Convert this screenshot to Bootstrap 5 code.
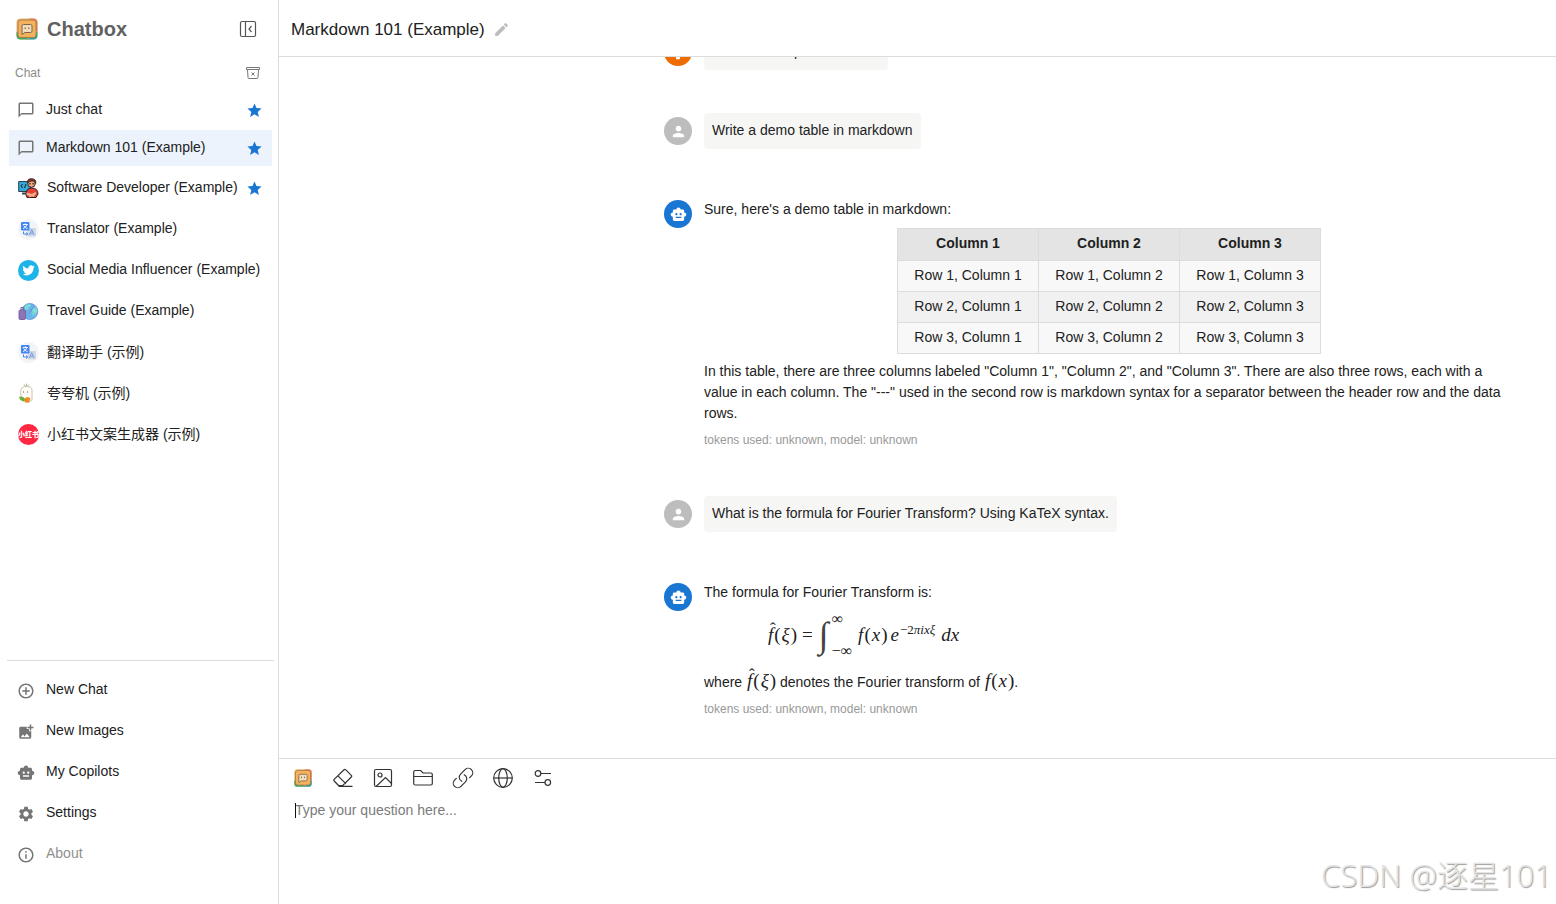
<!DOCTYPE html>
<html lang="en">
<head>
<meta charset="utf-8">
<meta name="viewport" content="width=device-width, initial-scale=1">
<title>Chatbox</title>
<link href="https://cdn.jsdelivr.net/npm/bootstrap@5.3.0/dist/css/bootstrap.min.css" rel="stylesheet">
<style>
  body { font-family: "Liberation Sans", "Noto Sans CJK SC", sans-serif; font-size: 14px; line-height: 21px; color: #212121; background: #fff; }
  .line { border-color: #dcdcdc !important; }
  .side { width: 279px; }
  .brand-name { font-size: 20px; line-height: 28px; color: #616161; margin-left: 9px; }
  .bare { border: 0; background: none; padding: 0; color: inherit; display: flex; }
  .side-head { height: 58px; padding: 0 21px 0 16px; }
  .label-row { height: 30px; padding: 0 18px 0 15px; font-size: 12px; color: #8a8a8a; }
  .entries { padding: 4px 6px 0 9px; gap: 2px; }
  .entry { height: 39px; padding: 0 9px; color: #212121; text-decoration: none; gap: 8px; }
  .entry.plain { height: 36px; padding-left: 8px; }
  .entry.plain + .entry:not(.plain) { height: 40px; }
  .entry.current { background: #ecf3fc; }
  .entry .slot { width: 21px; flex: none; display: flex; color: #757575; }
  .entry .label { white-space: nowrap; padding-bottom: 2px; }
  .entry .label:lang(zh) { padding-bottom: 0; }
  .lower { margin: 0 4px 0 7px; }
  .lower .entries { padding: 10px 0 30px 1px; }
  .muted { color: #8f8f8f; }
  .topbar { height: 57px; padding: 2px 12px 0; font-size: 17px; }
  .thread { min-height: 0; }
  .column { width: 100%; max-width: 850px; margin: 0 42px 0 auto; }
  .turn { gap: 12px; }
  .turn.asked { padding-bottom: 43px; }
  .turn.answer { padding: 7px 0 47px; }
  .turn.answer:last-child { padding-bottom: 40px; }
  .face { width: 28px; height: 28px; flex: none; color: #fff; margin-top: 4px; }
  .answer .face { margin-top: 1px; }
  .bubble { background: #f6f6f5; border-radius: 4px; padding: 7px 8px 8px; }
  .grid-demo { border-collapse: collapse; margin: 8px auto 7px; text-align: center; }
  .grid-demo th, .grid-demo td { width: 141px; border: 1px solid #dcdcdc; padding: 4px 16px 5px; background: #f8f8f8; }
  .grid-demo th { background: #e4e4e4; padding-bottom: 6px; }
  .grid-demo tr:nth-child(even) td { background: #f1f1f1; }
  .tokens { font-size: 12px; line-height: 18px; margin-top: 7px; color: #999; }
  .math { font-family: "Liberation Serif", serif; font-size: 19px; line-height: 24px; white-space: nowrap; }
  .math i { padding: 0 1px; }
  .hatted { position: relative; display: inline-block; }
  .hatted::after { content: "ˆ"; position: absolute; left: 3px; top: -6px; font-style: normal; font-size: 17px; }
  .display-math { height: 40px; margin: 12px 0 14px 63px; gap: 5px; }
  .integral { font-size: 36px; line-height: 40px; color: #444; }
  .limits { font-size: 16px; line-height: 12px; height: 44px; margin-left: -3px; }
  .power { font-size: 13px; line-height: 13px; padding-bottom: 8px; }
  .power i { padding: 0; }
  .exponential { margin-left: -3px; }
  .composer { height: 146px; padding: 9px 15px 0 14px; }
  .tools { gap: 20px; }
  .ask { font: inherit; width: 100%; height: 80px; border: 0; outline: 0; resize: none; padding: 0 0 0 2px; background: none; }
  .ask::placeholder { color: #7b7b7b; opacity: 1; }
  .field { padding-top: 12px; }
  .caret { position: absolute; left: 2px; top: 15px; width: 1px; height: 15px; background: #111; }
  .signature { position: absolute; right: 4px; bottom: 9px; font-family: "Open Sans", "Noto Sans CJK SC", sans-serif; font-weight: 300; font-size: 31px; line-height: 40px; color: #e4e4e4; text-shadow: 1px 1px 1px #999; pointer-events: none; white-space: nowrap; }
  .pen { color: #bdbdbd; margin-left: 8px; }
</style>
</head>
<body class="overflow-hidden">
<svg width="0" height="0" class="position-absolute" aria-hidden="true">
  <defs>
    <symbol id="logo" viewBox="0 0 22 22">
      <rect x=".5" y=".5" width="21" height="21" rx="4" fill="#e9b878"/>
      <path d="M12 .5h5.500a4 4 0 0 1 4 4V13h-3V3z" fill="#e98468"/>
      <path d="M.5 14v3.500a4 4 0 0 0 4 4H12v-3z" fill="#3fae6b"/>
      <path d="M11 21.500h6.500a4 4 0 0 0 4-4V13l-3 4z" fill="#2aa4a8"/>
      <rect x="2" y="2" width="18" height="17.500" rx="2.500" fill="#f4b25c" stroke="#a8743f" stroke-width=".9"/>
      <path d="M7.500 6.500h7q1.500 0 1.500 1.500v5q0 1.500-1.500 1.500H9l-3 2V8q0-1.500 1.500-1.500z" fill="#f3dcb8" stroke="#7d6450"/>
      <path d="M9.200 9.500v1.500M12.800 9.500v1.500" stroke="#6b4d33"/>
    </symbol>
    <symbol id="bubble" viewBox="0 0 24 24"><path fill="currentColor" d="M20 2H4c-1.100 0-2 .9-2 2v18l4-4h14c1.100 0 2-.9 2-2V4c0-1.100-.9-2-2-2zm0 14H6l-2 2V4h16v12z"/></symbol>
    <symbol id="star" viewBox="0 0 24 24"><path fill="#1976d2" d="M12 17.270 18.180 21l-1.640-7.030L22 9.240l-7.190-.61L12 2 9.190 8.630 2 9.240l5.460 4.730L5.820 21z"/></symbol>
    <symbol id="robot" viewBox="0 0 24 24"><path fill="currentColor" d="M20 9V7c0-1.100-.9-2-2-2h-3c0-1.660-1.340-3-3-3S9 3.340 9 5H6c-1.100 0-2 .9-2 2v2c-1.660 0-3 1.340-3 3s1.340 3 3 3v4c0 1.100.9 2 2 2h12c1.100 0 2-.9 2-2v-4c1.660 0 3-1.340 3-3s-1.340-3-3-3zM7.500 11.500c0-.83.67-1.500 1.500-1.500s1.500.67 1.500 1.500S9.830 13 9 13s-1.500-.67-1.500-1.500zM16 17H8v-2h8v2zm-1-4c-.83 0-1.500-.67-1.500-1.500S14.170 10 15 10s1.500.67 1.500 1.500S15.830 13 15 13z"/></symbol>
    <symbol id="person" viewBox="0 0 24 24"><path fill="currentColor" d="M12 12c2.210 0 4-1.790 4-4s-1.790-4-4-4-4 1.790-4 4 1.790 4 4 4zm0 2c-2.670 0-8 1.340-8 4v2h16v-2c0-2.660-5.330-4-8-4z"/></symbol>
    <symbol id="gear" viewBox="0 0 24 24"><path fill="currentColor" d="M19.140 12.940c.04-.3.06-.61.06-.94 0-.32-.02-.64-.07-.94l2.030-1.580c.18-.14.23-.41.12-.61l-1.920-3.320c-.12-.22-.37-.29-.59-.22l-2.390.96c-.5-.38-1.030-.7-1.620-.94l-.36-2.540c-.04-.24-.24-.41-.48-.41h-3.840c-.24 0-.43.17-.47.41l-.36 2.540c-.59.24-1.130.57-1.620.94l-2.390-.96c-.22-.08-.47 0-.59.22L2.740 8.870c-.12.21-.08.47.12.61l2.030 1.580c-.05.3-.09.63-.09.94s.02.64.07.94l-2.030 1.580c-.18.14-.23.41-.12.61l1.920 3.320c.12.22.37.29.59.22l2.390-.96c.5.38 1.030.7 1.620.94l.36 2.540c.05.24.24.41.48.41h3.840c.24 0 .44-.17.47-.41l.36-2.540c.59-.24 1.130-.56 1.620-.94l2.390.96c.22.08.47 0 .59-.22l1.920-3.320c.12-.22.07-.47-.12-.61l-2.010-1.580zM12 15.600c-1.980 0-3.600-1.620-3.600-3.600s1.620-3.600 3.600-3.600 3.600 1.620 3.600 3.600-1.620 3.600-3.600 3.600z"/></symbol>
    <symbol id="translate" viewBox="0 0 21 21">
      <circle cx="10.500" cy="10.500" r="10.500" fill="#f3f4f6"/>
      <rect x="9.500" y="9" width="8.500" height="8.500" rx="1" fill="#d3d8e0"/>
      <rect x="3" y="3" width="8.500" height="8.500" rx="1" fill="#4285f4"/>
      <path d="M4.800 5.500h5M7.300 4.300v1.200M9 5.500Q8 8.500 5 9.700M5.600 6.500Q7 9 9.600 9.700" stroke="#fff" stroke-width=".9" fill="none"/>
      <path d="M11.500 16l2.200-5.500L16 16M12.300 14.300h2.800" stroke="#6d9df0" fill="none"/>
      <path d="M5.500 12.500v2.500h4M8 13.500l1.800 1.500L8 16.500" stroke="#4285f4" fill="none"/>
    </symbol>
  </defs>
</svg>
<div class="d-flex vh-100">
  <aside class="side d-flex flex-column flex-shrink-0 border-end line">
    <div class="side-head d-flex align-items-center">
      <svg width="22" height="22"><use href="#logo"/></svg>
      <span class="brand-name fw-bold">Chatbox</span>
      <button class="bare ms-auto" aria-label="Collapse sidebar"><svg width="18" height="18" viewBox="0 0 18 18" fill="none" stroke="#555" stroke-width="1.200"><rect x="1.500" y="1.500" width="15" height="15" rx="1.500"/><path d="M6.500 1.500v15M12.500 6 10 9l2.500 3"/></svg></button>
    </div>
    <div class="label-row d-flex align-items-center">
      <span>Chat</span>
      <button class="bare ms-auto" aria-label="Clear conversations"><svg width="14" height="14" viewBox="0 0 14 14" fill="none" stroke="#777"><path d="M.5 1.500h13v2H.5zM1.500 3.500l.5 8q0 1 1 1h8q1 0 1-1l.5-8M5.500 6.500l3 3M8.500 6.500l-3 3"/></svg></button>
    </div>
    <nav class="entries d-flex flex-column">
      <a href="#" class="entry plain d-flex align-items-center"><span class="slot"><svg width="18" height="18"><use href="#bubble"/></svg></span><span class="label">Just chat</span><svg class="ms-auto flex-shrink-0" width="17" height="17"><use href="#star"/></svg></a>
      <a href="#" class="entry plain current d-flex align-items-center"><span class="slot"><svg width="18" height="18"><use href="#bubble"/></svg></span><span class="label">Markdown 101 (Example)</span><svg class="ms-auto flex-shrink-0" width="17" height="17"><use href="#star"/></svg></a>
      <a href="#" class="entry d-flex align-items-center"><span class="slot"><svg width="21" height="21" viewBox="0 0 21 21">
        <path d="M.7 3.500h12v10h-12z" fill="#35a9d6" stroke="#27404d"/><path d="M4.500 6 3 8l1.500 2M8 6l-1.500 4" stroke="#123" fill="none"/><path d="M4 14.500h5v2H4z" fill="#2d4654"/>
        <circle cx="13.500" cy="5.500" r="3.800" fill="#efaa82" stroke="#40201c"/><path d="M9.300 5Q9 .8 13.500.6 18.500.8 17.800 5.500q-1-2.500-3.500-2.500T9.300 5z" fill="#7b3427" stroke="#2b1613" stroke-width=".6"/><path d="M10.800 5.800h2M14.200 5.800h2" stroke="#222"/>
        <path d="M8 17q0-7 5.500-7 6.500 0 6.500 6l-2 3.500H9z" fill="#e4403a" stroke="#3a1717"/><path d="M8.500 15.500l8 2.500M18 15l-7 3.500" stroke="#f2b28c" stroke-width="2"/></svg></span><span class="label">Software Developer (Example)</span><svg class="ms-auto flex-shrink-0" width="17" height="17"><use href="#star"/></svg></a>
      <a href="#" class="entry d-flex align-items-center"><span class="slot"><svg width="21" height="21"><use href="#translate"/></svg></span><span class="label">Translator (Example)</span></a>
      <a href="#" class="entry d-flex align-items-center"><span class="slot"><svg width="21" height="21" viewBox="0 0 21 21"><circle cx="10.500" cy="10.500" r="10.500" fill="#1eb4ea"/><path transform="translate(4.300 4.200) scale(.52)" fill="#fff" d="M23.950 4.570a10 10 0 0 1-2.820.77 4.960 4.960 0 0 0 2.160-2.720c-.95.55-2 .95-3.130 1.180a4.920 4.920 0 0 0-8.380 4.480C7.690 8.100 4.070 6.130 1.640 3.160a4.920 4.920 0 0 0 1.520 6.570 4.900 4.900 0 0 1-2.230-.61v.06a4.920 4.920 0 0 0 3.950 4.830 5 5 0 0 1-2.210.08 4.940 4.940 0 0 0 4.600 3.420A9.870 9.870 0 0 1 0 19.540a14 14 0 0 0 7.550 2.210c9.050 0 14-7.500 14-13.980l-.01-.64a9.900 9.900 0 0 0 2.410-2.560z"/></svg></span><span class="label">Social Media Influencer (Example)</span></a>
      <a href="#" class="entry d-flex align-items-center"><span class="slot"><svg width="21" height="21" viewBox="0 0 21 21"><circle cx="11.800" cy="10.500" r="8" fill="#63b5ea" stroke="#7c98e0"/><path d="M7 5q3-3 6-1l-2 4-4 1zM14 9l4-3 1.500 4-3 5-3-2z" fill="#7be0d6"/><path d="M10 6l7 8M16 5l-6 9" stroke="#8088d8" stroke-width=".7" fill="none"/><rect x="1" y="9" width="6.500" height="9.500" rx="1.200" fill="#8f74b3" stroke="#7a62a5"/><path d="M3 9V6.500h2.500V9" stroke="#7a5d9f" fill="none"/></svg></span><span class="label">Travel Guide (Example)</span></a>
      <a href="#" class="entry d-flex align-items-center"><span class="slot"><svg width="21" height="21"><use href="#translate"/></svg></span><span class="label" lang="zh">翻译助手 (示例)</span></a>
      <a href="#" class="entry d-flex align-items-center"><span class="slot"><svg width="21" height="21" viewBox="0 0 21 21"><path d="M3 13Q1.500 4.500 6 3.800 8.500 2.500 11 3.800 14.500 4 14 9v8q-1 2-5 2-5-.5-6-6z" fill="#fffdf8" stroke="#c2b29f" stroke-width=".8"/><path d="M7.500 3.500 6 1.200M8.500 3.500V.6M9 3.500l2-2" stroke="#9ab87c" stroke-width=".8"/><path d="M5.500 8.500v1M9.500 8.500v1" stroke="#555"/><path d="M1 14q4-1.500 6.500 2.500L6 18.500q-4-.5-5-4.500z" fill="#65b33c"/><path d="M6.500 15.500q3-3 6 0l-1.500 4H7z" fill="#f28a24"/></svg></span><span class="label" lang="zh">夸夸机 (示例)</span></a>
      <a href="#" class="entry d-flex align-items-center"><span class="slot"><svg width="21" height="21" viewBox="0 0 21 21"><circle cx="10.500" cy="10.500" r="10.500" fill="#ff2742"/><text x="10.500" y="13.200" text-anchor="middle" font-size="7" font-weight="900" fill="#fff" font-family="Noto Sans CJK SC, sans-serif">小红书</text></svg></span><span class="label" lang="zh">小红书文案生成器 (示例)</span></a>
    </nav>
    <div class="lower border-top line mt-auto">
      <nav class="entries d-flex flex-column">
        <a href="#" class="entry d-flex align-items-center"><span class="slot"><svg width="18" height="18" viewBox="0 0 24 24"><path fill="currentColor" d="M13 7h-2v4H7v2h4v4h2v-4h4v-2h-4V7zm-1-5C6.480 2 2 6.480 2 12s4.480 10 10 10 10-4.480 10-10S17.520 2 12 2zm0 18c-4.410 0-8-3.590-8-8s3.590-8 8-8 8 3.590 8 8-3.590 8-8 8z"/></svg></span><span class="label">New Chat</span></a>
        <a href="#" class="entry d-flex align-items-center"><span class="slot"><svg width="18" height="18" viewBox="0 0 24 24"><path fill="currentColor" d="M19 7v2.990s-1.990.01-2 0V7h-3s.01-1.990 0-2h3V2h2v3h3v2h-3zm-3 4V8h-3V5H5c-1.100 0-2 .9-2 2v12c0 1.100.9 2 2 2h12c1.100 0 2-.9 2-2v-8h-3zM5 19l3-4 2 3 3-4 4 5H5z"/></svg></span><span class="label">New Images</span></a>
        <a href="#" class="entry d-flex align-items-center"><span class="slot"><svg width="18" height="18"><use href="#robot"/></svg></span><span class="label">My Copilots</span></a>
        <a href="#" class="entry d-flex align-items-center"><span class="slot"><svg width="18" height="18"><use href="#gear"/></svg></span><span class="label">Settings</span></a>
        <a href="#" class="entry d-flex align-items-center"><span class="slot"><svg width="18" height="18" viewBox="0 0 24 24"><path fill="currentColor" d="M11 7h2v2h-2zm0 4h2v6h-2zm1-9C6.480 2 2 6.480 2 12s4.480 10 10 10 10-4.480 10-10S17.520 2 12 2zm0 18c-4.410 0-8-3.590-8-8s3.590-8 8-8 8 3.590 8 8-3.590 8-8 8z"/></svg></span><span class="label muted">About</span></a>
      </nav>
    </div>
  </aside>

  <main class="flex-grow-1 d-flex flex-column overflow-hidden position-relative">
    <header class="topbar d-flex align-items-center border-bottom line flex-shrink-0">
      <span>Markdown 101 (Example)</span>
      <button class="bare pen" aria-label="Rename"><svg width="17" height="17" viewBox="0 0 24 24"><path fill="currentColor" d="M3 17.250V21h3.750L17.810 9.940l-3.750-3.750L3 17.250zM20.710 7.040c.39-.39.39-1.020 0-1.410l-2.340-2.340c-.39-.39-1.020-.39-1.410 0l-1.830 1.830 3.750 3.750 1.830-1.830z"/></svg></button>
    </header>

    <section class="thread flex-grow-1 overflow-hidden d-flex flex-column justify-content-end">
      <div class="column">
        <div class="turn asked d-flex">
          <span class="face rounded-circle d-flex align-items-center justify-content-center" style="background:#ef6c00"><svg width="18" height="18"><use href="#gear"/></svg></span>
          <div class="bubble">You are a helpful assistant.</div>
        </div>
        <div class="turn asked d-flex">
          <span class="face rounded-circle d-flex align-items-center justify-content-center" style="background:#bdbdbd"><svg width="17" height="17"><use href="#person"/></svg></span>
          <div class="bubble">Write a demo table in markdown</div>
        </div>
        <div class="turn answer d-flex">
          <span class="face rounded-circle d-flex align-items-center justify-content-center" style="background:#1976d2"><svg width="17" height="17"><use href="#robot"/></svg></span>
          <div class="flex-grow-1">
            <div>Sure, here's a demo table in markdown:</div>
            <table class="grid-demo">
              <thead><tr><th>Column 1</th><th>Column 2</th><th>Column 3</th></tr></thead>
              <tbody>
                <tr><td>Row 1, Column 1</td><td>Row 1, Column 2</td><td>Row 1, Column 3</td></tr>
                <tr><td>Row 2, Column 1</td><td>Row 2, Column 2</td><td>Row 2, Column 3</td></tr>
                <tr><td>Row 3, Column 1</td><td>Row 3, Column 2</td><td>Row 3, Column 3</td></tr>
              </tbody>
            </table>
            <div>In this table, there are three columns labeled "Column 1", "Column 2", and "Column 3". There are also three rows, each with a value in each column. The "---" used in the second row is markdown syntax for a separator between the header row and the data rows.</div>
            <div class="tokens">tokens used: unknown, model: unknown</div>
          </div>
        </div>
        <div class="turn asked d-flex">
          <span class="face rounded-circle d-flex align-items-center justify-content-center" style="background:#bdbdbd"><svg width="17" height="17"><use href="#person"/></svg></span>
          <div class="bubble">What is the formula for Fourier Transform? Using KaTeX syntax.</div>
        </div>
        <div class="turn answer d-flex">
          <span class="face rounded-circle d-flex align-items-center justify-content-center" style="background:#1976d2"><svg width="17" height="17"><use href="#robot"/></svg></span>
          <div class="flex-grow-1">
            <div>The formula for Fourier Transform is:</div>
            <div class="math display-math d-flex align-items-center">
              <span><i class="hatted">f</i>(<i>ξ</i>)</span><span>=</span>
              <span class="integral"><i>∫</i></span>
              <span class="limits d-flex flex-column justify-content-between"><span>∞</span><span>−∞</span></span>
              <span><i>f</i>(<i>x</i>)</span>
              <span class="exponential d-flex"><i>e</i><span class="power">−2<i>πixξ</i></span></span>
              <i>dx</i>
            </div>
            <div>where <span class="math"><i class="hatted">f</i>(<i>ξ</i>)</span> denotes the Fourier transform of <span class="math"><i>f</i>(<i>x</i>)</span>.</div>
            <div class="tokens">tokens used: unknown, model: unknown</div>
          </div>
        </div>
      </div>
    </section>

    <footer class="composer border-top line flex-shrink-0">
      <div class="tools d-flex align-items-center">
        <button class="bare" aria-label="Chatbox menu"><svg width="20" height="20" viewBox="-1 -1 24 24"><use href="#logo" width="22" height="22"/></svg></button>
        <button class="bare" aria-label="Clear"><svg width="20" height="20" viewBox="0 0 20 20" fill="none" stroke="#333" stroke-width="1.200"><path d="M5.500 17.500 1.200 13q-.8-.8 0-1.600L11 1.700q.8-.8 1.600 0l5.700 5.700q.8.8 0 1.600L9.800 17.500zM5 7.800l8 8M5.500 18.300h14"/></svg></button>
        <button class="bare" aria-label="Image"><svg width="20" height="20" viewBox="0 0 20 20" fill="none" stroke="#333" stroke-width="1.200"><rect x="1.500" y="1.500" width="17" height="17" rx="1.500"/><circle cx="7" cy="7" r="2"/><path d="M3 18.500 12.500 9.500l6 6"/></svg></button>
        <button class="bare" aria-label="File"><svg width="20" height="20" viewBox="0 0 20 20" fill="none" stroke="#333" stroke-width="1.200"><path d="M.7 15.500V4q0-1.500 1.500-1.500h5.500L10 5h7.800q1.500 0 1.500 1.500v9q0 1.500-1.500 1.500H2.200q-1.500 0-1.500-1.500zM.7 8.500h18.600"/></svg></button>
        <button class="bare" aria-label="Link"><svg class="overflow-visible" width="20" height="20" viewBox="2 2 20 20" fill="none" stroke="#333" stroke-width="1.200" stroke-linecap="round"><path d="M13.190 8.688a4.500 4.500 0 0 1 1.242 7.244l-4.500 4.500a4.500 4.500 0 0 1-6.364-6.364l1.757-1.757m13.350-.622 1.757-1.757a4.500 4.500 0 0 0-6.364-6.364l-4.500 4.500a4.500 4.500 0 0 0 1.242 7.244"/></svg></button>
        <button class="bare" aria-label="Web browsing"><svg width="20" height="20" viewBox="0 0 20 20" fill="none" stroke="#333" stroke-width="1.200"><circle cx="10" cy="10" r="9.300"/><ellipse cx="10" cy="10" rx="4.300" ry="9.300"/><path d="M.7 10h18.600"/></svg></button>
        <button class="bare" aria-label="Conversation settings"><svg width="20" height="20" viewBox="0 0 20 20" fill="none" stroke="#333" stroke-width="1.200"><circle cx="5" cy="5.500" r="2.800"/><path d="M7.800 5.500H18M2 14.500h10"/><circle cx="14.800" cy="14.500" r="2.800"/></svg></button>
      </div>
      <div class="field position-relative">
        <textarea class="ask" aria-label="Message" placeholder="Type your question here..."></textarea>
        <span class="caret"></span>
      </div>
    </footer>
    <div class="signature">CSDN @逐星101</div>
  </main>
</div>
<script src="https://cdn.jsdelivr.net/npm/bootstrap@5.3.0/dist/js/bootstrap.bundle.min.js"></script>
</body>
</html>
